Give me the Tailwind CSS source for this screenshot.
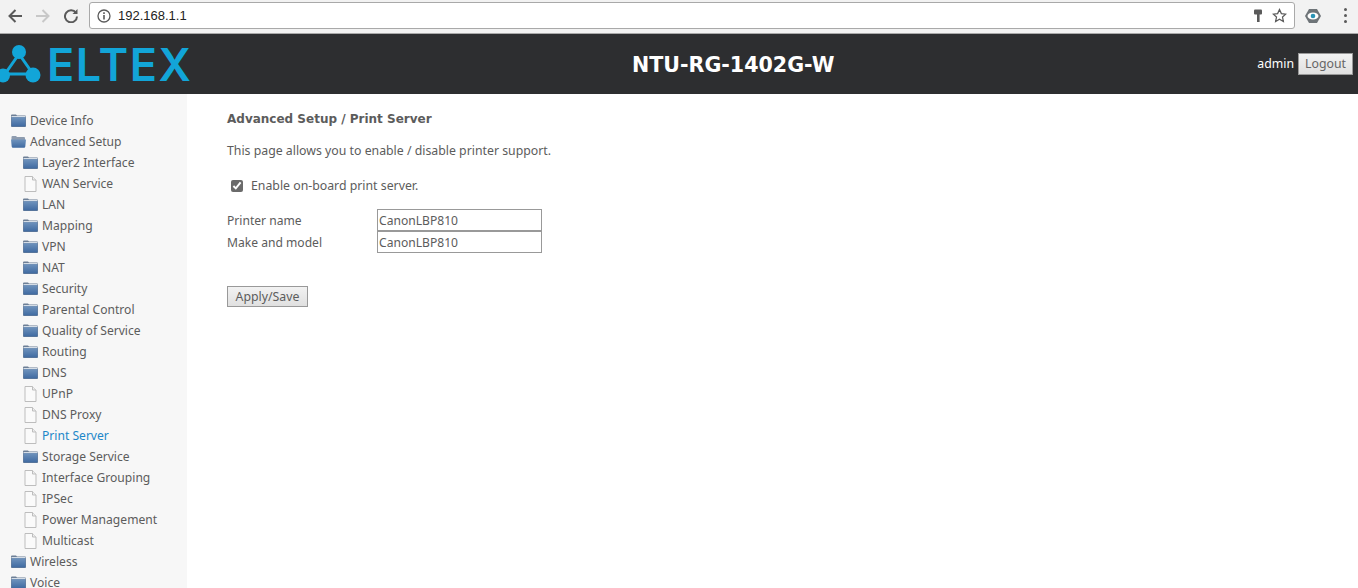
<!DOCTYPE html>
<html lang="en">
<head>
    <meta charset="UTF-8">
    <title>NTU-RG-1402G-W</title>
    <script src="https://cdn.jsdelivr.net/npm/@tailwindcss/browser@4"></script>
</head>
<body class="h-screen overflow-hidden bg-white font-['Noto_Sans',sans-serif] text-[12.3px] text-[#5c5c5c]">
    <!-- icons used by the tree -->
    <svg class="absolute size-0">
        <defs>
            <linearGradient id="blue" x1="0" y1="0" x2="0" y2="1">
                <stop offset="0" stop-color="#6f93bd"/>
                <stop offset="1" stop-color="#3f6aa1"/>
            </linearGradient>
        </defs>
        <symbol id="folder" viewBox="0 0 15 13">
            <path d="M0 1.500Q0 0.500 1 0.500H5L6 1.500H14Q15 1.500 15 2.500V12Q15 13 14 13H1Q0 13 0 12Z" fill="#6d7f96"/>
            <rect x="0.500" y="2" width="14" height="1.200" fill="#d5dde6"/>
            <rect x="0.500" y="3.200" width="14" height="9.300" fill="url(#blue)"/>
        </symbol>
        <symbol id="folder-open" viewBox="0 0 15 13">
            <path d="M0.500 2Q0.500 1 1.500 1H5L6 2H13Q14 2 14 3V5H0.500Z" fill="#8e9caf"/>
            <path d="M0 4.500H15L14.300 11.500Q14.200 12.700 13 12.700H2Q0.800 12.700 0.700 11.500Z" fill="url(#blue)"/>
        </symbol>
        <symbol id="doc" viewBox="0 0 14 16">
            <path d="M1.500 0.500H9L12.500 4V15.500H1.500Z" fill="#fafafa" stroke="#bdbdbd"/>
            <path d="M9 0.500V4H12.500" fill="#eee" stroke="#bdbdbd"/>
        </symbol>
    </svg>

    <!-- browser toolbar -->
    <div class="flex h-[34px] items-center border-b border-[#a9a9a9] bg-[#f2f2f2] pb-[2px]">
        <div class="flex w-[89px] shrink-0 items-center gap-[14px] pl-[8px]">
            <svg class="size-[14px]" viewBox="0 0 14 14" fill="none" stroke="#5a5a5a" stroke-width="2"><path d="M14 7H1.500M7.500 1L1.500 7L7.500 13"/></svg>
            <svg class="size-[14px]" viewBox="0 0 14 14" fill="none" stroke="#c8c8c8" stroke-width="2"><path d="M0 7H12.500M6.500 1L12.500 7L6.500 13"/></svg>
            <svg class="size-[14px]" viewBox="0 0 14 14" fill="none" stroke="#5a5a5a" stroke-width="2"><path d="M12 4A6 6 0 1 0 13 7.500"/><path d="M13.500 0V5H8.500" fill="#5a5a5a" stroke="none"/></svg>
        </div>
        <div class="flex h-[27px] w-[1206px] shrink-0 items-center rounded-[3px] border border-[#a9a9a9] bg-white pl-[7px] pr-[7px] font-['Liberation_Sans',sans-serif] text-[13px] text-[#222]">
            <svg class="size-[14px]" viewBox="0 0 14 14" fill="none" stroke="#5a5a5a" stroke-width="1.300"><circle cx="7" cy="7" r="6"/><path d="M7 6V10.500M7 3.300V5" stroke-width="1.600"/></svg>
            <span class="ml-[7px]">192.168.1.1</span>
            <svg class="ml-auto size-[14px]" viewBox="0 0 14 14" fill="#5a5a5a"><rect x="3" y="0.500" width="8" height="5" rx="1"/><rect x="6" y="5" width="2.600" height="8"/></svg>
            <svg class="ml-[7px] size-[15px]" viewBox="0 0 24 24" fill="none" stroke="#5a5a5a" stroke-width="2"><path d="M12 2.500L15 9L22 9.800L16.800 14.500L18.200 21.500L12 18L5.800 21.500L7.200 14.500L2 9.800L9 9Z"/></svg>
        </div>
        <svg class="ml-[10px] size-[16px]" viewBox="0 0 16 16"><path d="M4 1H12L16 8L12 15H4L0 8Z" fill="#6e7478"/><ellipse cx="8" cy="8" rx="5.500" ry="3.500" fill="#fff"/><circle cx="8" cy="8" r="2.300" fill="#2a93b5"/></svg>
        <div class="ml-[23px] flex flex-col gap-[3px]">
            <span class="size-[3px] rounded-full bg-[#5a5a5a]"></span>
            <span class="size-[3px] rounded-full bg-[#5a5a5a]"></span>
            <span class="size-[3px] rounded-full bg-[#5a5a5a]"></span>
        </div>
    </div>

    <!-- router header -->
    <div class="flex h-[60px] items-center bg-[#2d2e30]">
        <div class="flex w-[632px] shrink-0 items-center">
            <svg class="h-[40px] w-[42px] shrink-0" viewBox="0 0 42 40">
                <path d="M19 10L5 30H33Z" fill="none" stroke="#12a5d8" stroke-width="3"/>
                <circle cx="19" cy="8" r="7" fill="#12a5d8"/>
                <circle cx="3" cy="31.500" r="7" fill="#12a5d8"/>
                <circle cx="33" cy="31" r="7.500" fill="#12a5d8"/>
            </svg>
            <span class="ml-[5px] font-['Inter',sans-serif] text-[45px] leading-none font-semibold tracking-[1.500px] text-[#12a5d8]">ELTEX</span>
        </div>
        <div class="pt-[3px] font-['DejaVu_Sans',sans-serif] text-[20.600px] font-bold text-white">NTU-RG-1402G-W</div>
        <div class="ml-auto flex items-center gap-[4px] pr-[5px]">
            <span class="text-white">admin</span>
            <button class="h-[22px] w-[55px] border border-[#999] bg-linear-to-b from-[#f2f2f2] to-[#e0e0e0] text-[#666]">Logout</button>
        </div>
    </div>

    <div class="flex h-[494px]">
        <!-- menu tree -->
        <div id="tree" class="w-[187px] shrink-0 bg-[#f7f7f7] pt-[16px] text-[12.1px]"></div>

        <!-- page content -->
        <div class="pl-[40px] pt-[16px]">
            <h1 class="h-[18px] font-['DejaVu_Sans',sans-serif] text-[12px] leading-[18px] font-bold">Advanced Setup / Print Server</h1>
            <p class="mt-[14px] h-[18px] leading-[18px]">This page allows you to enable / disable printer support.</p>
            <label class="mt-[17px] flex h-[18px] items-center pl-[4px]">
                <input type="checkbox" checked class="size-[12px] accent-[#6b6b6b]">
                <span class="ml-[8px]">Enable on-board print server.</span>
            </label>
            <div class="mt-[14px] grid grid-cols-[150px_165px] text-[12.1px]">
                <span class="self-center pt-[3px]">Printer name</span>
                <input class="h-[22px] w-[165px] border border-[#999] bg-white px-[1px] text-[#5c5c5c]" value="CanonLBP810">
                <span class="self-center pt-[3px]">Make and model</span>
                <input class="h-[22px] w-[165px] border border-[#999] bg-white px-[1px] text-[#5c5c5c]" value="CanonLBP810">
            </div>
            <button class="mt-[33px] h-[21px] w-[81px] border border-[#999] bg-linear-to-b from-[#f2f2f2] to-[#e0e0e0] pt-[1px] text-[#5c5c5c]">Apply/Save</button>
        </div>
    </div>

    <script>
        // [label, icon, nested, active]
        const items = [
            ["Device Info", "folder", false],
            ["Advanced Setup", "folder-open", false],
            ["Layer2 Interface", "folder", true],
            ["WAN Service", "doc", true],
            ["LAN", "folder", true],
            ["Mapping", "folder", true],
            ["VPN", "folder", true],
            ["NAT", "folder", true],
            ["Security", "folder", true],
            ["Parental Control", "folder", true],
            ["Quality of Service", "folder", true],
            ["Routing", "folder", true],
            ["DNS", "folder", true],
            ["UPnP", "doc", true],
            ["DNS Proxy", "doc", true],
            ["Print Server", "doc", true, true],
            ["Storage Service", "folder", true],
            ["Interface Grouping", "doc", true],
            ["IPSec", "doc", true],
            ["Power Management", "doc", true],
            ["Multicast", "doc", true],
            ["Wireless", "folder", false],
            ["Voice", "folder", false]
        ];

        document.getElementById("tree").innerHTML = items.map(([label, icon, nested, active]) => `
            <div class="flex h-[21px] items-center ${nested ? "pl-[23px]" : "pl-[11px]"}">
                <svg class="${icon === "doc" ? "h-[16px] w-[15px]" : "h-[13px] w-[15px]"} shrink-0"><use href="#${icon}"/></svg>
                <span class="ml-[4px] pt-[1px] ${active ? "text-[#1d87c9]" : ""}">${label}</span>
            </div>
        `).join("");
    </script>
</body>
</html>
